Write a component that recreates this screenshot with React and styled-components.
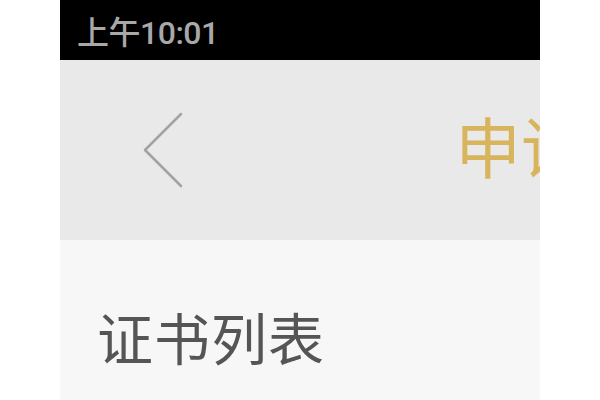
import React from 'react';
import styled, {createGlobalStyle} from 'styled-components';

const Global = createGlobalStyle`
  html, body {
    margin: 0;
    padding: 0;
    background: #fff;
  }
  body {
    font-family: "Noto Sans CJK SC", "Noto Sans", sans-serif;
  }
`;

const Page = styled.div`
  display: flex;
  justify-content: center;
  width: 600px;
  height: 400px;
  background: #fff;
`;

const Phone = styled.div`
  width: 480px;
  height: 400px;
  overflow: hidden;
  display: flex;
  flex-direction: column;
`;

const StatusBar = styled.div`
  height: 60px;
  flex: none;
  background: #000;
  color: #a8a8a8;
  display: flex;
  align-items: center;
  padding-left: 17px;
  font-family: Roboto, "Noto Sans CJK SC", sans-serif;
  font-size: 32px;
  font-weight: 500;
  letter-spacing: -0.5px;
`;

const Header = styled.div`
  height: 180px;
  flex: none;
  background: #e9e9e9;
  display: flex;
  align-items: center;
`;

const BackButton = styled.button`
  border: none;
  background: none;
  padding: 0;
  margin-left: 80px;
  width: 50px;
  height: 80px;
  display: flex;
  align-items: center;
  cursor: pointer;
`;

const Title = styled.div`
  margin-left: 265px;
  white-space: nowrap;
  color: #d8b45c;
  font-size: 66px;
  line-height: 1;
  margin-top: -12px;
`;

const Content = styled.div`
  flex: 1;
  background: #f7f7f7;
  padding: 68px 0 0 37px;
`;

const SectionTitle = styled.h2`
  margin: 0;
  font-size: 56px;
  font-weight: 400;
  color: #555;
  line-height: 1;
  letter-spacing: 1px;
`;

const ChevronLeft = () => (
  <svg width="50" height="80" viewBox="0 0 50 80">
    <polyline points="41,4 5,40 41,76" fill="none" stroke="#a3a3a3" strokeWidth="2.5" strokeLinecap="round" strokeLinejoin="round" />
  </svg>
);

export default function App() {
  return (
    <Page>
      <Global />
      <Phone>
        <StatusBar>上午10:01</StatusBar>
        <Header>
          <BackButton aria-label="返回">
            <ChevronLeft />
          </BackButton>
          <Title>申请证书</Title>
        </Header>
        <Content>
          <SectionTitle>证书列表</SectionTitle>
        </Content>
      </Phone>
    </Page>
  );
}
